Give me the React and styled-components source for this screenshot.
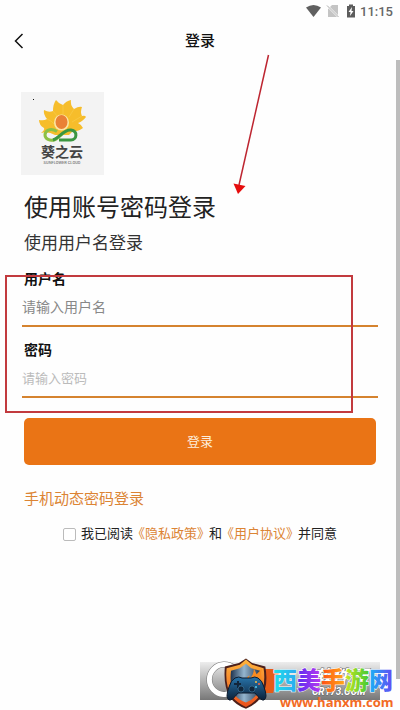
import { useState } from 'react'
import styled, { createGlobalStyle } from 'styled-components'

const GlobalStyle = createGlobalStyle`
    *, *::before, *::after {
        box-sizing: border-box;
    }

    body {
        margin: 0;
        background: #fefefe;
        color: #222;
        font-family: Roboto, 'Noto Sans CJK SC', sans-serif;
    }
`

const Screen = styled.div`
    position: relative;
    min-height: 100vh;
    overflow: hidden;
`

const StatusBar = styled.div`
    display: flex;
    justify-content: flex-end;
    align-items: center;
    gap: 5px;
    height: 22px;
    padding-right: 7px;
    font-size: 13px;
    font-weight: 500;
    color: #666;
`

const Header = styled.header`
    display: grid;
    grid-template-columns: 38px 1fr 38px;
    align-items: center;
    height: 38px;
`

const BackButton = styled.button`
    display: flex;
    justify-content: center;
    padding: 8px 0;
    border: 0;
    background: none;
    color: #111;
`

const Title = styled.h1`
    margin: 0;
    font-size: 15px;
    font-weight: 500;
    line-height: 20px;
    text-align: center;
    color: #111;
`

const Content = styled.main`
    padding: 32px 22px 0;
`

const Logo = styled.svg`
    display: block;
    width: 83px;
    height: 83px;
    margin-left: -1px;
    background: #f3f3f3;
`

const Heading = styled.h2`
    margin: 17px 2px 7px;
    font-size: 24px;
    font-weight: 400;
    line-height: 32px;
`

const Subtitle = styled.p`
    margin: 0 2px 14px;
    font-size: 17px;
    line-height: 24px;
    color: #333;
`

const Fields = styled.div`
    position: relative;
    display: flex;
    flex-direction: column;
    gap: 13px;
`

const Field = styled.div`
    display: flex;
    flex-direction: column;
`

const Label = styled.label`
    padding-left: 2px;
    font-size: 14px;
    font-weight: 700;
    line-height: 20px;
    color: #111;
`

const Input = styled.input`
    width: 100%;
    height: 38px;
    padding: 0;
    border: 0;
    border-bottom: 2px solid #d5832f;
    background: none;
    font-family: inherit;
    font-size: ${props => props.$small ? '13px' : '14px'};
    color: #222;
    outline: none;

    &::placeholder {
        color: ${props => props.$small ? '#bbb' : '#888'};
        opacity: 1;
    }
`

const Highlight = styled.div`
    position: absolute;
    inset: 6px 25px -15px -17px;
    border: 2px solid #c23a3e;
    pointer-events: none;
`

const SubmitButton = styled.button`
    display: block;
    width: calc(100% - 4px);
    height: 47px;
    margin: 20px 2px 22px;
    padding: 0 0 2px;
    border: 0;
    border-radius: 5px;
    background: #ea7415;
    font-family: inherit;
    font-size: 13px;
    color: #fdeedd;
`

const OtherLogin = styled.a`
    display: inline-block;
    margin-left: 2px;
    font-size: 15px;
    line-height: 24px;
    text-decoration: none;
    color: #dc8434;
`

const Agreement = styled.div`
    display: flex;
    justify-content: center;
    align-items: center;
    margin-top: 13px;
    font-size: 13px;
    line-height: 20px;
    white-space: nowrap;
`

const Checkbox = styled.input`
    appearance: none;
    width: 13px;
    height: 13px;
    margin: 0 5px 0 0;
    border: 1px solid #bbb;
    border-radius: 2px;
    background: #fff;

    &:checked {
        border-color: #ea7415;
        background: #ea7415;
    }
`

const PolicyLink = styled.a`
    margin: 0 -1px;
    text-decoration: none;
    color: #dc8434;
`

const ScrollThumb = styled.div`
    position: absolute;
    top: 60px;
    right: 0;
    bottom: 31px;
    width: 4px;
    background: #bdbdbd;
`

const Arrow = styled.svg`
    position: absolute;
    top: 54px;
    left: 230px;
    pointer-events: none;
`

const Watermark = styled.svg`
    position: absolute;
    right: 0;
    bottom: 0;
    pointer-events: none;
`

function StatusIcons() {
    return (
        <svg width="49" height="14" viewBox="0 0 49 14" aria-hidden="true">
            <path d="M0 3.5Q7.500-1.500 15 3.500L7.500 13Z" fill="#606060" />
            <path d="M22 5 26 1h6v12H22Z" fill="#c4c4c4" />
            <path d="m20.500 1 12 12" stroke="#fefefe" strokeWidth="2" />
            <path d="m21 1.500 11.500 11.500" stroke="#aaa" />
            <path d="M41 2h2V.5h4V2h2v11.500h-8Z" fill="#5c5c5c" />
            <path d="m46 3-3.500 5h2l-.5 4 3.500-5h-2Z" fill="#fefefe" />
        </svg>
    )
}

function BrandLogo() {
    return (
        <Logo viewBox="0 0 83 83" role="img" aria-label="葵之云">
            <path
                d="M20 41Q24 38 23 36 18 33 18 28 23 29 26 27 22 22 23 18 28 21 32 19 32 12 35 8 38 12 42 13 45 9 50 8 49 13 53 17 58 14 61 15 59 20 61 24 64 23 65 25 61 30 57 31 61 33 62 36 56 40 52 39L48 43H34Q27 39 20 41Z"
                fill="#f6bd2b"
            />
            <path d="M26 27Q31 29 33 32M32 19 37 25M42 13V23M53 17 48 25M61 24 51 30" fill="none" stroke="#f9d057" strokeWidth=".5" />
            <ellipse cx="40.500" cy="30.500" rx="7.500" ry="8" fill="#fbe7a6" />
            <ellipse cx="40.500" cy="30" rx="6" ry="7" fill="#ea8136" />
            <path d="M36 39.500C29 35 24 39 24 43S29 49 33 48 40 42 45 39" fill="none" stroke="#8dc044" strokeWidth="3" />
            <path d="M32 48C38 46 43 37 50 38S56 48 50 48H38" fill="none" stroke="#3b9641" strokeWidth="3" />
            <text x="41" y="65" textAnchor="middle" fontSize="14" fontWeight="700" fill="#444">葵之云</text>
            <text x="41" y="72" textAnchor="middle" fontSize="4" fontWeight="500" fill="#777">SUNFLOWER CLOUD</text>
            <rect x="12" y="7" width="1" height="1" fill="#111" />
        </Logo>
    )
}

const siteName = [
    { char: '西', id: 'cyan' },
    { char: '美', id: 'purple' },
    { char: '手', id: 'orange' },
    { char: '游', id: 'green' },
    { char: '网', id: 'blue' },
]

function SiteMark() {
    return (
        <Watermark width="200" height="58" viewBox="0 0 200 58" aria-hidden="true">
            <defs>
                <linearGradient id="shade" x2="0" y2="1">
                    <stop stopColor="#ededed" />
                    <stop offset="1" stopColor="#777" />
                </linearGradient>
                <linearGradient id="cyan">
                    <stop stopColor="#1ee0e8" />
                    <stop offset="1" stopColor="#2ba9f2" />
                </linearGradient>
                <linearGradient id="purple">
                    <stop stopColor="#5a2df0" />
                    <stop offset="1" stopColor="#b93af0" />
                </linearGradient>
                <linearGradient id="orange">
                    <stop stopColor="#ff4d16" />
                    <stop offset="1" stopColor="#ffac18" />
                </linearGradient>
                <linearGradient id="green">
                    <stop stopColor="#c6e622" />
                    <stop offset="1" stopColor="#45c936" />
                </linearGradient>
                <linearGradient id="blue">
                    <stop stopColor="#18b4f4" />
                    <stop offset="1" stopColor="#6548f5" />
                </linearGradient>
                <linearGradient id="flame" x2="0" y2="1">
                    <stop stopColor="#ffb63d" />
                    <stop offset="1" stopColor="#ec501c" />
                </linearGradient>
                <linearGradient id="steel">
                    <stop stopColor="#1d324e" />
                    <stop offset=".45" stopColor="#94b5ce" />
                    <stop offset="1" stopColor="#243750" />
                </linearGradient>
                <linearGradient id="pad" x2="0" y2="1">
                    <stop stopColor="#2874aa" />
                    <stop offset="1" stopColor="#0b2038" />
                </linearGradient>
            </defs>

            <rect y="10" width="180" height="38" fill="url(#shade)" />
            <path d="M34 16A15 15 0 1 0 34 39" fill="none" stroke="#777" strokeWidth="6" />
            <path d="M34 16A15 15 0 1 0 34 39" fill="none" stroke="#fff" strokeWidth="5" />
            <path d="M61 17H80L73 41H60Z" fill="#e65c17" />
            <g fill="#fff" stroke="#666" strokeWidth="1" paintOrder="stroke" fontWeight="700" fontStyle="italic">
                <text x="114" y="31" fontSize="18">软件园</text>
                <text x="112" y="43" fontSize="10">CR173.COM</text>
            </g>

            <g transform="translate(5.500 6.500) scale(.88)">
                <path d="m46 0 7 5 15 4q4 23-5 35-6 9-17 13-12-4-18-13-8-12-6-35l16-4Z" fill="#4c201b" />
                <path d="m46 1 7 6 13 4q3 20-5 32-6 8-15 12-10-4-16-12-8-12-6-32l15-4Z" fill="url(#flame)" />
                <path d="m46 6 6 5 10 3q2 17-4 27-4 6-12 9-9-3-13-9-6-10-4-27l10-3Z" fill="url(#steel)" />
                <path d="M46 30q-2-7 4-11l-1 5q6-5 6-13l3 7 6-6q-2 7 1 13l-4 9H50Z" fill="#f98b20" />
                <path d="M51 30q0-4 4-7v4l4-5q-1 5 2 8Z" fill="#ffd04c" />
            </g>
            <g transform="translate(0 6)">
                <path
                    d="M35 20q4-2 7 0h9q4-2 7 0 4 2 6 9 4 11 0 13-3 1-9-7H38q-6 8-9 7-4-2 0-13 2-7 6-9Z"
                    fill="url(#pad)"
                    stroke="#0c1a2c"
                />
                <path d="M34 25h3v-2h2v2h2v2h-2v3h-2v-3h-3Z" fill="#12263b" />
                <circle cx="41" cy="31" r="3" fill="#11263b" stroke="#4c91bb" strokeWidth=".5" />
                <circle cx="52" cy="31" r="3" fill="#11263b" stroke="#4c91bb" strokeWidth=".5" />
                <circle cx="56" cy="24" r="1" fill="#ffbd40" />
                <circle cx="59" cy="26" r="1" fill="#ff6545" />
                <circle cx="56" cy="29" r="1" fill="#55cdf5" />
            </g>

            <g fontSize="24" fontWeight="900" stroke="#fff" strokeWidth="1" paintOrder="stroke">
                {siteName.map((item, index) => (
                    <text key={item.char} x={73 + index * 24} y="37" fill={`url(#${item.id})`}>{item.char}</text>
                ))}
            </g>
            <text
                x="80"
                y="55"
                fontFamily="'Open Sans', sans-serif"
                fontSize="13"
                fontWeight="700"
                fill="#f26a24"
            >
                www.hanxm.com
            </text>
        </Watermark>
    )
}

function App() {
    const [username, setUsername] = useState('')
    const [password, setPassword] = useState('')
    const [agreed, setAgreed] = useState(false)

    return (
        <>
            <GlobalStyle />
            <Screen>
                <StatusBar>
                    <StatusIcons />
                    <span>11:15</span>
                </StatusBar>
                <Header>
                    <BackButton aria-label="返回">
                        <svg width="10" height="16" viewBox="0 0 10 16" fill="none" stroke="currentColor" strokeWidth="1.500">
                            <path d="M8.500 1 1.500 8l7 7" />
                        </svg>
                    </BackButton>
                    <Title>登录</Title>
                </Header>
                <Content>
                    <BrandLogo />
                    <Heading>使用账号密码登录</Heading>
                    <Subtitle>使用用户名登录</Subtitle>
                    <form onSubmit={e => e.preventDefault()}>
                        <Fields>
                            <Field>
                                <Label htmlFor="username">用户名</Label>
                                <Input id="username" placeholder="请输入用户名" value={username} onChange={e => setUsername(e.target.value)} />
                            </Field>
                            <Field>
                                <Label htmlFor="password">密码</Label>
                                <Input id="password" type="password" placeholder="请输入密码" $small value={password} onChange={e => setPassword(e.target.value)} />
                            </Field>
                            <Highlight />
                        </Fields>
                        <SubmitButton type="submit">登录</SubmitButton>
                        <OtherLogin href="#mobile">手机动态密码登录</OtherLogin>
                        <Agreement>
                            <Checkbox id="agree" type="checkbox" checked={agreed} onChange={e => setAgreed(e.target.checked)} />
                            <label htmlFor="agree">我已阅读</label>
                            <PolicyLink href="#privacy">《隐私政策》</PolicyLink>
                            <span>和</span>
                            <PolicyLink href="#terms">《用户协议》</PolicyLink>
                            <span>并同意</span>
                        </Agreement>
                    </form>
                </Content>
                <ScrollThumb />
                <Arrow width="42" height="142" viewBox="0 0 42 142" aria-hidden="true">
                    <path d="M38.500 1 9 131" stroke="#bd2530" strokeWidth="1.500" />
                    <path d="m3.500 129.500 12 2.500-7.500 8Z" fill="#e60d0d" />
                </Arrow>
                <SiteMark />
            </Screen>
        </>
    )
}

export default App
